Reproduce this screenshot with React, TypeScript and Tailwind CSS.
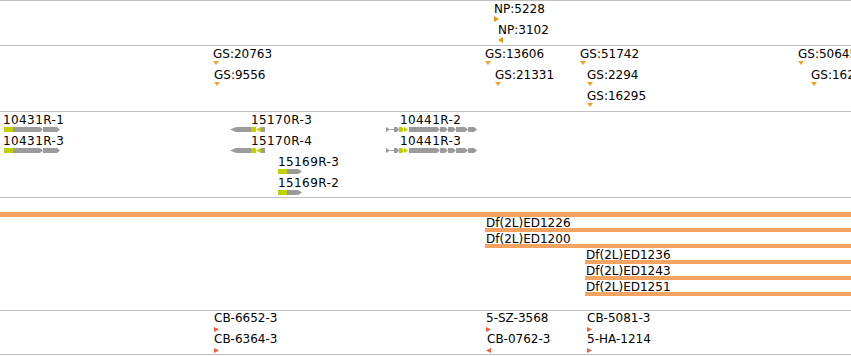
import React from "react";

type Dir = "r" | "l" | "d";

const LBL = "absolute whitespace-nowrap text-[12px] leading-[12px] text-black";

function Divider() {
  return <div className="h-px w-full bg-[#c0c0c0]" />;
}

function Tri({ x, y, dir, color, w, h }: { x: number; y: number; dir: Dir; color: string; w: number; h: number }) {
  const pts =
    dir === "r"
      ? `0,0 ${w},${h / 2} 0,${h}`
      : dir === "l"
      ? `${w},0 0,${h / 2} ${w},${h}`
      : `0,0 ${w},0 ${w / 2},${h}`;
  return (
    <svg className="absolute" style={{ left: x, top: y }} width={w} height={h} viewBox={`0 0 ${w} ${h}`}>
      <polygon points={pts} fill={color} />
    </svg>
  );
}

type Feat = { x: number; tx?: number; row: number; label: string; dir: Dir };

function Label({ x, y, text, wide }: { x: number; y: number; text: string; wide?: boolean }) {
  return (
    <div className={wide ? LBL + " tracking-[0.4px]" : LBL} style={{ left: x, top: y }}>
      {text}
    </div>
  );
}

function blockR(x1: number, x2: number, y: number, h: number, tip: number) {
  return `${x1},${y} ${x2 - tip},${y} ${x2},${y + h / 2} ${x2 - tip},${y + h} ${x1},${y + h}`;
}
function blockL(x1: number, x2: number, y: number, h: number, tip: number) {
  return `${x1},${y + h / 2} ${x1 + tip},${y} ${x2},${y} ${x2},${y + h} ${x1 + tip},${y + h}`;
}

const GRAY = "#9b9b9b";
const GREEN = "#bfd200";

function GeneGlyphs({ y }: { y: number }) {
  const h = 5;
  return (
    <g>
      {/* 10431R */}
      <rect x={4} y={y} width={9} height={h} fill={GREEN} />
      <polygon points={blockR(13, 43, y, h, 3)} fill={GRAY} />
      <polygon points={blockR(43, 60, y, h, 3)} fill={GRAY} />
      {/* 10441R */}
      <polygon points={`386,${y} 390,${y + h / 2} 386,${y + h}`} fill={GRAY} />
      <rect x={390} y={y + 2} width={4} height={1} fill={GRAY} />
      <polygon points={blockR(394, 399, y, h, 2)} fill={GRAY} />
      <polygon points={blockR(399, 404, y, h, 2)} fill={GREEN} />
      <polygon points={`404,${y} 408,${y + h / 2} 404,${y + h}`} fill={GREEN} />
      <polygon points={blockR(409, 440, y, h, 3)} fill={GRAY} />
      <polygon points={blockR(440, 448, y, h, 3)} fill={GRAY} />
      <polygon points={blockR(448, 456, y, h, 3)} fill={GRAY} />
      <polygon points={blockR(456, 468, y, h, 3)} fill={GRAY} />
      <polygon points={blockR(468, 477, y, h, 3)} fill={GRAY} />
      {/* 15170R */}
      <polygon points={blockL(230, 251, y, h, 6)} fill={GRAY} />
      <rect x={251} y={y} width={5} height={h} fill={GREEN} />
      <polygon points={`261,${y} 256,${y + h / 2} 261,${y + h}`} fill={GREEN} />
      <rect x={261} y={y} width={4} height={h} fill={GRAY} />
    </g>
  );
}

function Gene15169({ y }: { y: number }) {
  return (
    <g>
      <rect x={278} y={y} width={9} height={5} fill={GREEN} />
      <polygon points={blockR(287, 302, y, 5, 4)} fill={GRAY} />
    </g>
  );
}

const np: Feat[] = [
  { x: 494, row: 0, label: "NP:5228", dir: "r" },
  { x: 498, row: 1, label: "NP:3102", dir: "l" },
];

const gs: Feat[] = [
  { x: 213, row: 0, label: "GS:20763", dir: "d" },
  { x: 214, row: 1, label: "GS:9556", dir: "d" },
  { x: 485, row: 0, label: "GS:13606", dir: "d" },
  { x: 495, row: 1, label: "GS:21331", dir: "d" },
  { x: 580, row: 0, label: "GS:51742", dir: "d" },
  { x: 587, row: 1, label: "GS:2294", dir: "d" },
  { x: 587, row: 2, label: "GS:16295", dir: "d" },
  { x: 798, row: 0, label: "GS:50645", dir: "d" },
  { x: 811, row: 1, label: "GS:16217", dir: "d" },
];

const cb: Feat[] = [
  { x: 214, row: 0, label: "CB-6652-3", dir: "r" },
  { x: 214, row: 1, label: "CB-6364-3", dir: "r" },
  { x: 486, row: 0, label: "5-SZ-3568", dir: "r" },
  { x: 486, tx: 487, row: 1, label: "CB-0762-3", dir: "l" },
  { x: 587, row: 0, label: "CB-5081-3", dir: "r" },
  { x: 587, row: 1, label: "5-HA-1214", dir: "r" },
];

const df = [
  { x: 485, row: 1, label: "Df(2L)ED1226" },
  { x: 485, row: 2, label: "Df(2L)ED1200" },
  { x: 585, row: 3, label: "Df(2L)ED1236" },
  { x: 585, row: 4, label: "Df(2L)ED1243" },
  { x: 585, row: 5, label: "Df(2L)ED1251" },
];

const genes = [
  { x: 3, row: 0, label: "10431R-1" },
  { x: 3, row: 1, label: "10431R-3" },
  { x: 251, row: 0, label: "15170R-3" },
  { x: 251, row: 1, label: "15170R-4" },
  { x: 278, row: 2, label: "15169R-3" },
  { x: 278, row: 3, label: "15169R-2" },
  { x: 400, row: 0, label: "10441R-2" },
  { x: 400, row: 1, label: "10441R-3" },
];

export default function App() {
  return (
    <div
      className="w-[851px] h-[356px] overflow-hidden bg-white flex flex-col"
      style={{ fontFamily: '"DejaVu Sans", "Liberation Sans", sans-serif' }}
    >
      <Divider />
      {/* NP track */}
      <div className="relative h-[44px] w-full overflow-hidden">
        {np.map((f) => (
          <React.Fragment key={f.label}>
            <Label x={f.x} y={2 + f.row * 21} text={f.label} />
            <Tri x={f.x} y={15 + f.row * 21} dir={f.dir} color="#d99a0f" w={5} h={6} />
          </React.Fragment>
        ))}
      </div>
      <Divider />
      {/* GS track */}
      <div className="relative h-[65px] w-full overflow-hidden">
        {gs.map((f) => (
          <React.Fragment key={f.label}>
            <Label x={f.x} y={2 + f.row * 21} text={f.label} />
            <Tri x={f.x} y={15 + f.row * 21} dir={f.dir} color="#f2a32a" w={6} h={4} />
          </React.Fragment>
        ))}
      </div>
      <Divider />
      {/* Gene track */}
      <div className="relative h-[85px] w-full overflow-hidden">
        <svg className="absolute left-0 top-0" width={851} height={85} viewBox="0 0 851 85">
          <GeneGlyphs y={15} />
          <GeneGlyphs y={36} />
          <Gene15169 y={57} />
          <Gene15169 y={78} />
        </svg>
        {genes.map((g) => (
          <Label key={g.label} x={g.x} y={2 + g.row * 21} text={g.label} wide />
        ))}
      </div>
      <Divider />
      {/* Deficiency track */}
      <div className="relative h-[112px] w-full overflow-hidden">
        <div className="absolute left-0 right-0 top-[14px] h-[5px] bg-[#f4a460]" />
        {df.map((d) => (
          <React.Fragment key={d.label}>
            <div
              className="absolute right-0 h-[4px] bg-[#f4a460]"
              style={{ left: d.x, top: 14 + d.row * 16 }}
            />
            <Label x={d.x + 1} y={14 + d.row * 16 - 11} text={d.label} />
          </React.Fragment>
        ))}
      </div>
      <Divider />
      {/* CB track */}
      <div className="relative h-[43px] w-full overflow-hidden">
        {cb.map((f) => (
          <React.Fragment key={f.label}>
            <Label x={f.tx ?? f.x} y={1 + f.row * 21} text={f.label} />
            <Tri x={f.x} y={16 + f.row * 21} dir={f.dir} color="#f5603c" w={5} h={5} />
          </React.Fragment>
        ))}
      </div>
      <Divider />
    </div>
  );
}
